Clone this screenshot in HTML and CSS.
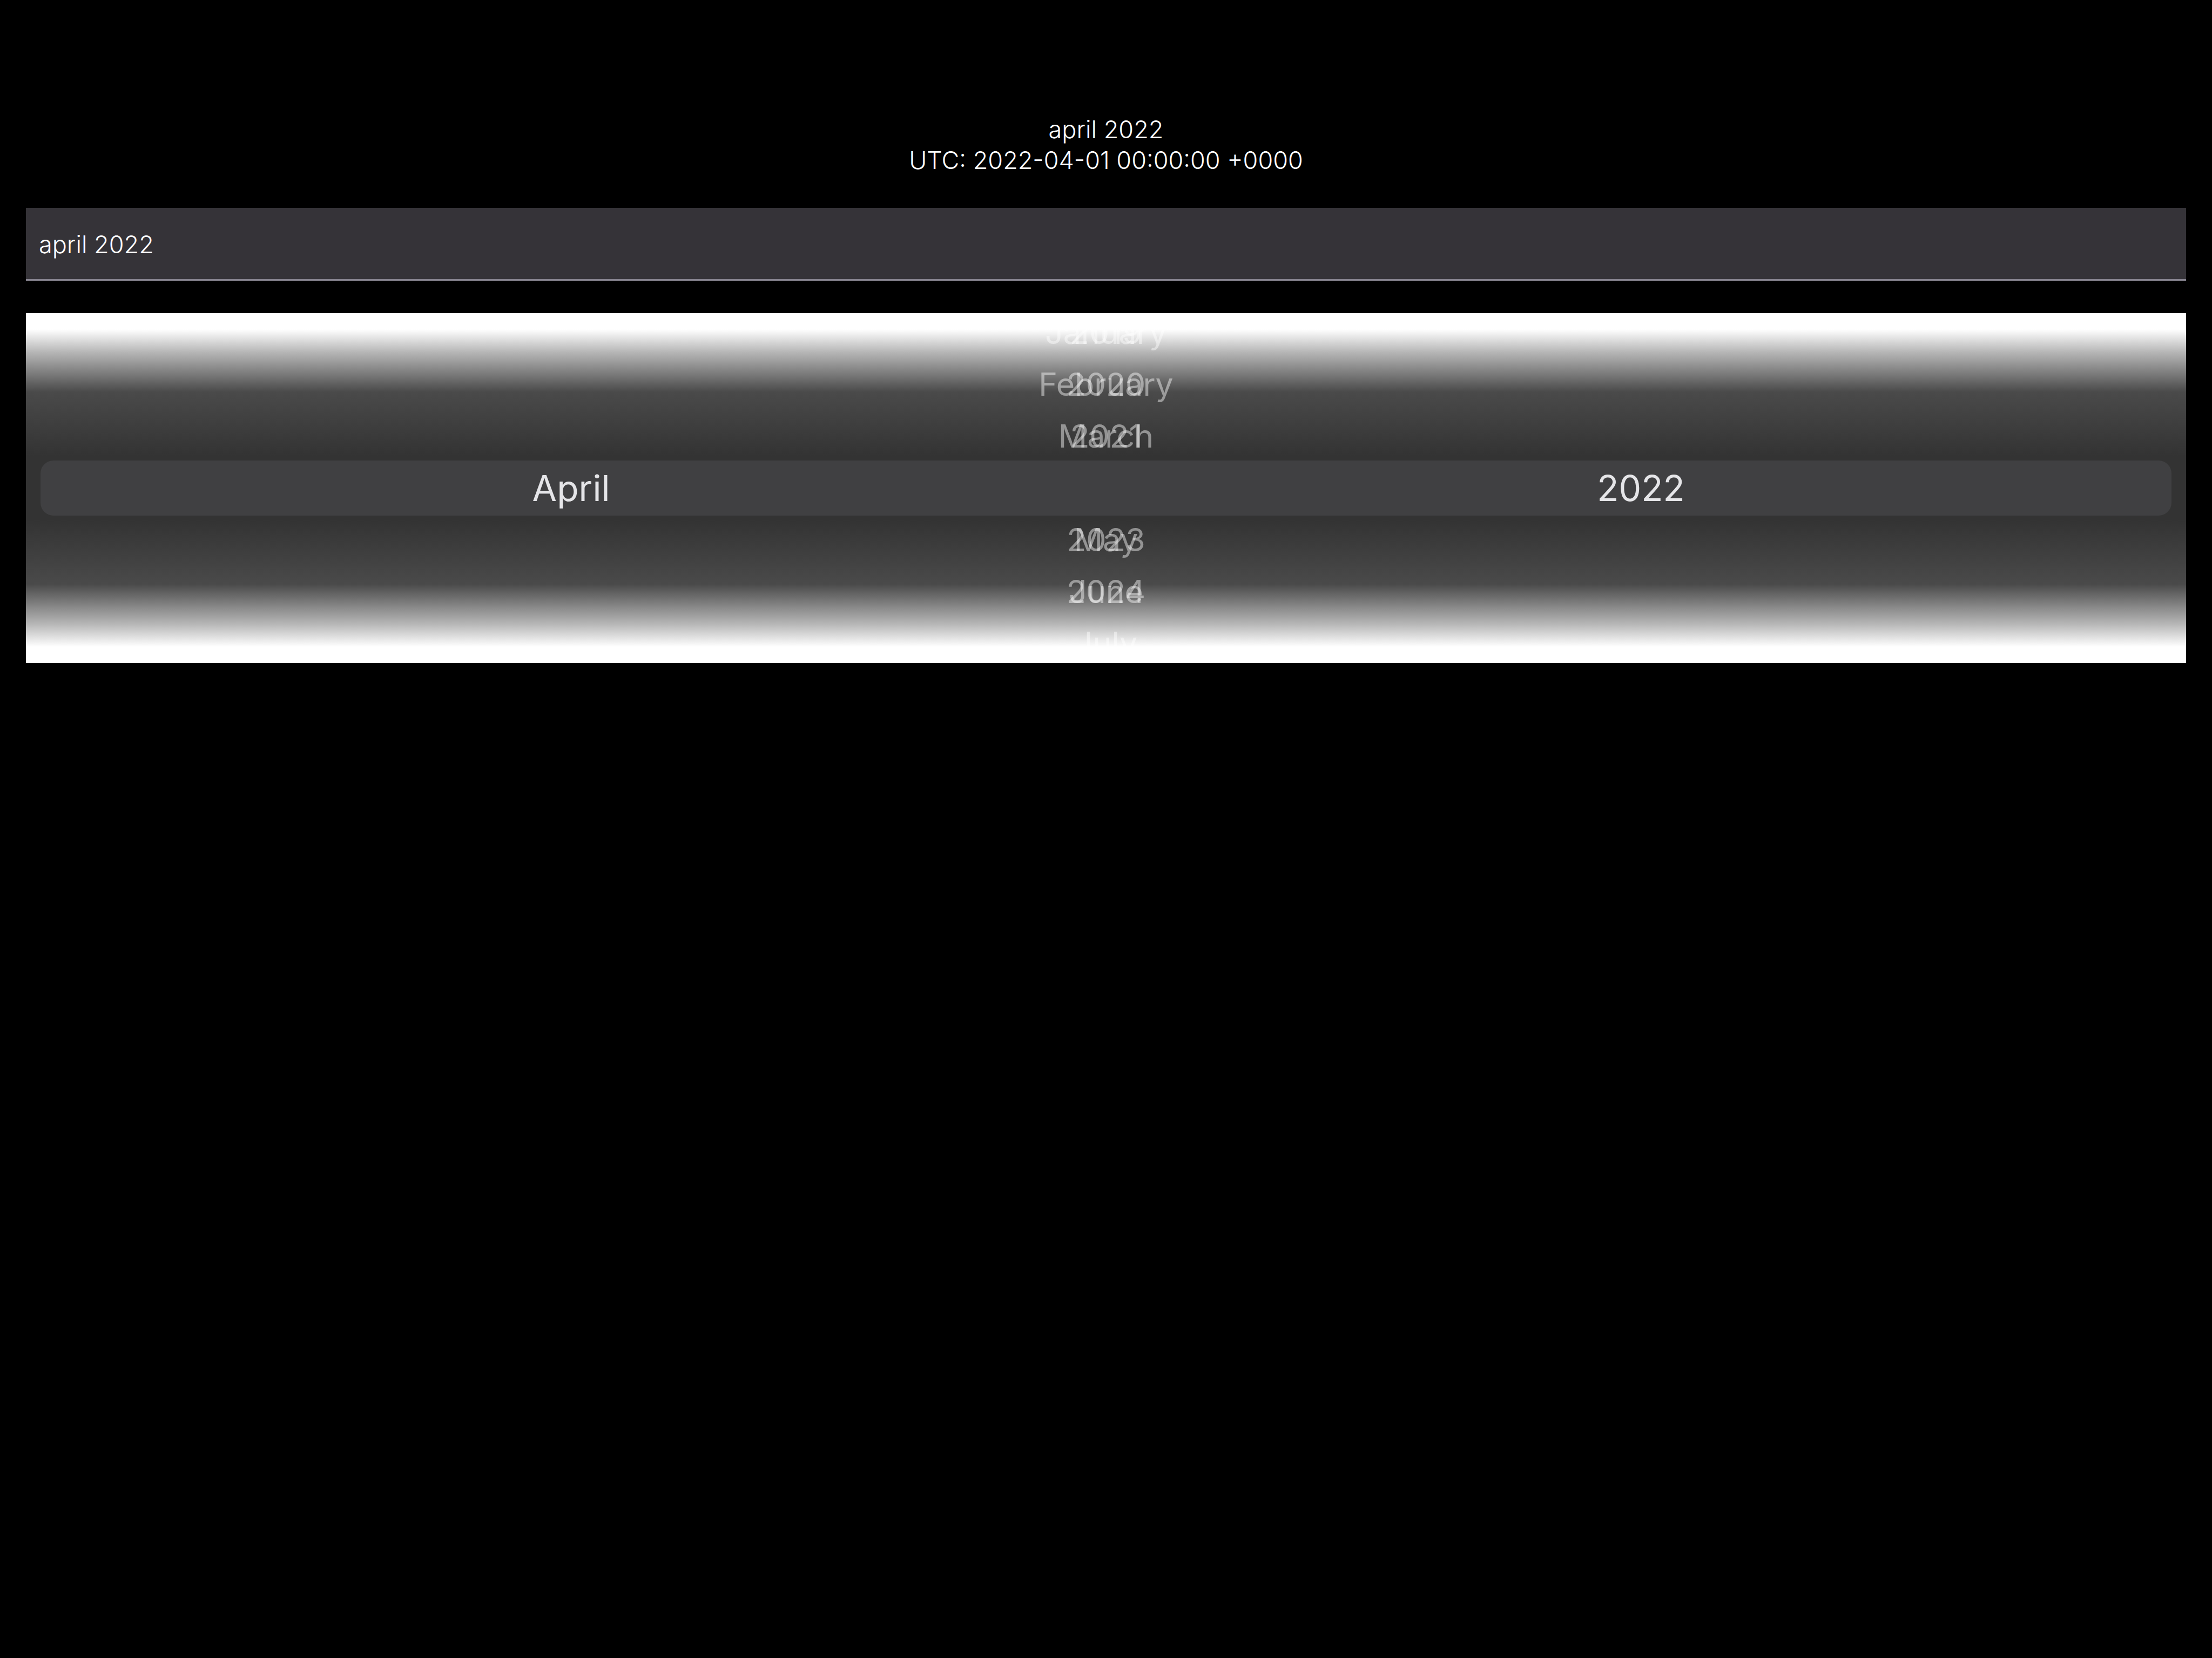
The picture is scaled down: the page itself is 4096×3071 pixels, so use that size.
FILE: index.html
```html
<!DOCTYPE html>
<html lang="en">
<head>
<meta charset="utf-8">
<title>Month and year picker</title>
<link rel="stylesheet" href="styles.css">
</head>
<body>
<main class="page">
  <header class="summary">
    <p>april 2022</p>
    <p>UTC: 2022-04-01 00:00:00 +0000</p>
  </header>
  <input class="field" type="text" value="april 2022" aria-label="Month and year">
  <section class="picker" aria-label="Month and year picker">
    <ul class="wheel" aria-label="Month">
      <li>January</li>
      <li>February</li>
      <li>March</li>
      <li class="gap"></li>
      <li>May</li>
      <li>June</li>
      <li>July</li>
    </ul>
    <ul class="wheel" aria-label="Year">
      <li>2019</li>
      <li>2020</li>
      <li>2021</li>
      <li class="gap"></li>
      <li>2023</li>
      <li>2024</li>
      <li class="gap"></li>
    </ul>
    <div class="selection">
      <span>April</span>
      <span>2022</span>
    </div>
  </section>
</main>
</body>
</html>
```
FILE: styles.css
```css
* {
  box-sizing: border-box;
}

body {
  margin: 0;
  min-height: 100vh;
  background: #000;
  color: #fff;
  font: 300 45px/57px Inter, "Liberation Sans", sans-serif;
}

.page {
  display: flex;
  flex-direction: column;
  padding: 211px 48px 48px;
}

.summary {
  margin-bottom: 60px;
  text-align: center;
}

.summary p {
  margin: 0;
}

.field {
  width: 100%;
  height: 135px;
  margin: 0 0 60px;
  padding: 2px 24px 0;
  border: 0;
  border-bottom: 3px solid #87848f;
  border-radius: 0;
  outline: 0;
  background: #353338;
  color: #fff;
  font: inherit;
}

/* Both wheels and the selection band share one grid cell. */
.picker {
  display: grid;
  grid-template: 648px / 1fr;
  align-items: center;
  overflow: hidden;
  background: linear-gradient(#fff 30px, #b5b5b5 73px, #4a4a4a 146px, #333 265px, #333 383px, #4a4a4a 502px, #b5b5b5 575px, #fff 618px);
}

.wheel,
.selection {
  grid-area: 1 / 1;
}

.wheel {
  margin: 0;
  padding: 0;
  list-style: none;
  text-align: center;
  color: rgba(255, 255, 255, 0.45);
  font-size: 59px;
  font-weight: 400;
  line-height: 96px;
}

.gap {
  height: 96px;
}

.selection {
  display: grid;
  grid-template-columns: 1fr 1fr;
  gap: 16px;
  margin: 0 27px;
  border-radius: 24px;
  background: #404042;
  color: #e5e5e8;
  text-align: center;
  font-size: 66px;
  font-weight: 400;
  line-height: 102px;
}
```
